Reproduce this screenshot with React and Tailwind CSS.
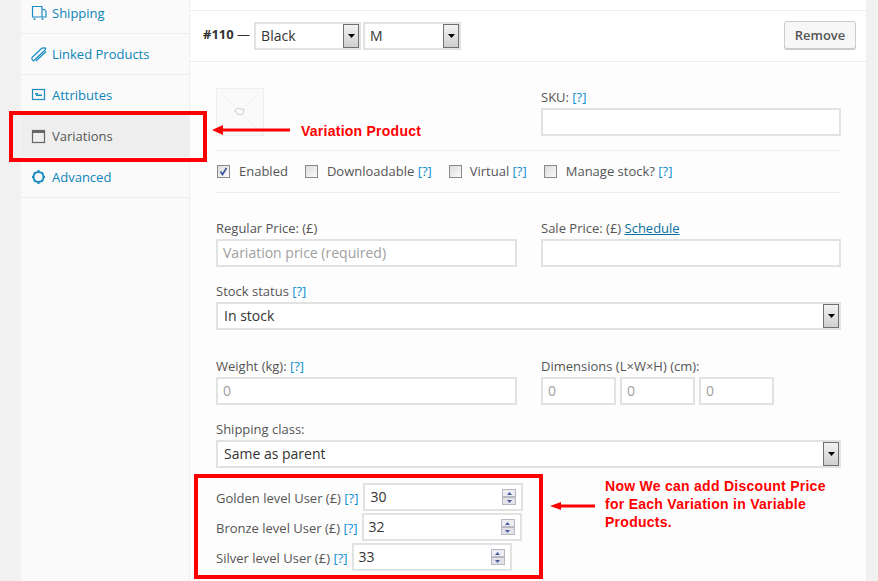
import React from "react";

const font = { fontFamily: '"Open Sans", sans-serif' };

function Help() {
  return <span className="text-[#0c8fd0]">[?]</span>;
}

function NavRow({ icon, label, active, first }) {
  return (
    <div
      className={`flex h-[41px] items-center border-b border-[#eeeeee] pl-[10px] text-[13px] ${
        active ? "bg-[#eeeeee] text-[#555555]" : "text-[#0d84b8]"
      } ${first ? "-mt-[7px]" : ""}`}
    >
      <span className="mr-[5px] -mt-[1px] flex h-[16px] w-[16px] items-center justify-center">{icon}</span>
      <span className="mt-[2px]">{label}</span>
    </div>
  );
}

const Truck = (
  <svg width="16" height="16" viewBox="0 0 16 16" fill="none" stroke="#1b8cc0" strokeWidth="1.2">
    <path d="M1.5 12V1.500h9.500V12H1.500z" />
    <path d="M11 4.500h2.500L15 6.500V12h-4" />
    <circle cx="3.500" cy="14" r="1" fill="#1b8cc0" stroke="none" />
    <circle cx="11.500" cy="14" r="1" fill="#1b8cc0" stroke="none" />
  </svg>
);
const LinkIcon = (
  <svg width="16" height="16" viewBox="0 0 16 16" fill="none" stroke="#1b8cc0" strokeWidth="1.200">
    <path d="M1 11.500L10.500 2.500c1-1 3-.7 3.500 0M2.500 15L14 4c1-1 .6-2 0-2.500M1 11.500c-.5 1.200.3 3 1.500 3.500M5 15L15 5.500" />
  </svg>
);
const Attr = (
  <svg width="16" height="16" viewBox="0 0 16 16" fill="none">
    <rect x="1.500" y="2.500" width="12" height="10" stroke="#1b8cc0" strokeWidth="1.200" />
    <rect x="4" y="6" width="3" height="1.500" fill="#1b8cc0" />
    <rect x="5" y="7.500" width="6" height="1.500" fill="#1b8cc0" />
  </svg>
);
const Win = (
  <svg width="16" height="16" viewBox="0 0 16 16" fill="none">
    <rect x="1.500" y="2.500" width="12" height="12" stroke="#666666" strokeWidth="1.200" />
    <rect x="1" y="2" width="13" height="3" fill="#666666" />
  </svg>
);
const Gear = (
  <svg width="16" height="16" viewBox="0 0 16 16" fill="none">
    <circle cx="7.500" cy="8" r="5" stroke="#1b8cc0" strokeWidth="2" />
    <path d="M7.500 1v2.500M7.500 12.500V15M1 8h2M12 8h2M3 3.500l1.300 1.300M12 3.500l-1.300 1.300M3 12.500l1.300-1.300M12 12.500l-1.300-1.300" stroke="#1b8cc0" strokeWidth="2" />
  </svg>
);

function Arrow() {
  return (
    <span className="flex h-full w-[16px] shrink-0 items-center justify-center border border-[#707070] bg-gradient-to-b from-[#f2f2f2] to-[#cfcfcf]">
      <svg width="7" height="4" viewBox="0 0 7 4"><path d="M0 0h7L3.500 4z" fill="#000" /></svg>
    </span>
  );
}

function Select({ children, className = "", pl = "pl-[6px]" }) {
  return (
    <div className={`flex h-[28px] items-center border-2 border-[#e2e2e2] bg-white text-[14px] text-[#333333] ${pl} ${className}`}>
      <span className="-mt-[2px] flex-1 truncate">{children}</span>
      <Arrow />
    </div>
  );
}

function Input({ children, className = "", muted }) {
  return (
    <div className={`flex h-[28px] items-center border-2 border-[#e2e2e2] bg-white pb-[2px] pl-[5px] text-[14px] ${muted ? "text-[#a0a0a0]" : "text-[#333333]"} ${className}`}>
      {children}
    </div>
  );
}

function Check({ checked }) {
  return (
    <span className="flex h-[13px] w-[13px] shrink-0 items-center justify-center border border-[#8a8a8a] bg-gradient-to-br from-[#dcdcdc] to-[#fbfbfb]">
      {checked && (
        <svg width="9" height="9" viewBox="0 0 9 9"><path d="M1.500 4.500l2 3 4-6.500" fill="none" stroke="#3a4f9e" strokeWidth="1.600" /></svg>
      )}
    </span>
  );
}

function Spinner() {
  return (
    <span className="flex w-[14px] flex-col">
      <span className="flex h-[8px] items-center justify-center border border-[#b8b8c4] bg-[#eeeef2]">
        <svg width="5" height="3" viewBox="0 0 5 3"><path d="M0 3h5L2.500 0z" fill="#4a5aa0" /></svg>
      </span>
      <span className="flex h-[8px] items-center justify-center border border-[#b8b8c4] bg-[#e2e2e8]">
        <svg width="5" height="3" viewBox="0 0 5 3"><path d="M0 0h5L2.500 3z" fill="#4a5aa0" /></svg>
      </span>
    </span>
  );
}

function LevelRow({ label, value, gap }) {
  return (
    <div className="flex h-[28px] items-center">
      <span className="whitespace-nowrap pt-[4px] text-[13px] text-[#555555]">
        {label} <Help />
      </span>
      <div className={`flex h-[28px] w-[160px] items-center justify-between border-2 border-[#e2e2e2] bg-white pl-[5px] pr-[5px] text-[14px] text-[#333333] ${gap}`}>
        <span className="-mt-[2px]">{value}</span>
        <Spinner />
      </div>
    </div>
  );
}

function CheckItem({ checked, children, className = "", gap = "gap-[9px]" }) {
  return (
    <span className={`flex items-center ${gap} ${className}`}>
      <Check checked={checked} />
      <span className="mt-[1px]">{children}</span>
    </span>
  );
}

export default function App() {
  return (
    <div style={font} className="relative flex h-[581px] w-[878px] overflow-hidden bg-[#f1f1f1] text-[13px] text-[#555555]">
      <div className="ml-[21px] w-[169px] shrink-0 border-r border-[#eeeeee] bg-[#fafafa]">
        <NavRow first icon={Truck} label="Shipping" />
        <NavRow icon={LinkIcon} label="Linked Products" />
        <NavRow icon={Attr} label="Attributes" />
        <NavRow active icon={Win} label="Variations" />
        <NavRow icon={Gear} label="Advanced" />
      </div>

      <div className="flex w-[676px] shrink-0 flex-col bg-[#fdfdfd]">
        <div className="h-[11px] border-b border-[#eeeeee] bg-white" />
        <div className="flex h-[51px] items-center border-b border-[#eeeeee] bg-white pl-[13px] pr-[10px]">
          <span className="mr-[4px] -mt-[3px] text-[13px] text-[#333333]"><b>#110</b> —</span>
          <Select pl="pl-[5px]" className="w-[107px]">Black</Select>
          <Select pl="pl-[5px]" className="ml-[2px] w-[98px]">M</Select>
          <div className="ml-auto -mt-[2px] flex h-[28px] w-[72px] items-center justify-center rounded-[3px] border border-[#cccccc] bg-[#f7f7f7] pt-[1px] text-[13px] font-semibold text-[#555555] shadow-[0_1px_0_#cccccc]">
            Remove
          </div>
        </div>

        <div className="flex flex-col pl-[26px] pr-[25px]">
          <div className="mt-[26px] flex h-[48px]">
            <div className="h-[48px] w-[48px] border border-[#eeeeee] bg-[#fafafa]">
              <svg width="46" height="46" viewBox="0 0 46 46" fill="none">
                <path d="M0 0l46 46M46 0L28 18" stroke="#f2f2f2" />
                <path d="M18 21l3-2 3 1 3 .5-.5 2.500-1 2.500h-5l-1-2.500-2-1z" stroke="#cfcfcf" fill="#fafafa" />
              </svg>
            </div>
            <div className="ml-[277px] flex w-[300px] flex-col">
              <span className="h-[20px] leading-[19px]">SKU: <Help /></span>
              <Input />
            </div>
          </div>

          <div className="mt-[14px] flex h-[43px] items-center border-y border-[#eeeeee] pl-[1px]">
            <CheckItem checked>Enabled</CheckItem>
            <CheckItem className="ml-[17px]">Downloadable <Help /></CheckItem>
            <CheckItem className="ml-[17px]" gap="gap-[8px]">Virtual <Help /></CheckItem>
            <CheckItem className="ml-[17px]">Manage stock? <Help /></CheckItem>
          </div>

          <div className="mt-[25px] flex">
            <div className="flex w-[301px] flex-col">
              <span className="h-[21px] leading-[21px]">Regular Price: (£)</span>
              <Input muted>Variation price (required)</Input>
            </div>
            <div className="ml-[24px] flex w-[300px] flex-col">
              <span className="h-[21px] leading-[21px]">Sale Price: (£) <span className="text-[#0c6f9f] underline">Schedule</span></span>
              <Input />
            </div>
          </div>

          <span className="mt-[14px] h-[21px] leading-[21px]">Stock status <Help /></span>
          <Select className="w-[625px]">In stock</Select>

          <div className="mt-[26px] flex">
            <div className="flex w-[301px] flex-col">
              <span className="h-[21px] leading-[21px]">Weight (kg): <Help /></span>
              <Input muted>0</Input>
            </div>
            <div className="ml-[24px] flex flex-col">
              <span className="h-[21px] leading-[21px]">Dimensions (L×W×H) (cm):</span>
              <div className="flex gap-[4px]">
                <Input muted className="w-[75px]">0</Input>
                <Input muted className="w-[75px]">0</Input>
                <Input muted className="w-[75px]">0</Input>
              </div>
            </div>
          </div>

          <span className="mt-[14px] h-[21px] leading-[21px]">Shipping class:</span>
          <Select className="w-[625px]">Same as parent</Select>

          <div className="mt-[15px] flex flex-col gap-[2px]">
            <LevelRow label="Golden level User (£)" value="30" gap="ml-[5px]" />
            <LevelRow label="Bronze level User (£)" value="32" gap="ml-[4px]" />
            <LevelRow label="Silver level User (£)" value="33" gap="ml-[4px]" />
          </div>
        </div>
      </div>

      {/* annotations */}
      <div className="absolute left-[9px] top-[111px] h-[51px] w-[198px] border-[4px] border-[#ff0000]" />
      <div className="absolute left-[194px] top-[474px] h-[105px] w-[349px] border-[4px] border-[#ff0000]" />

      <svg className="absolute left-[212px] top-[124px]" width="78" height="12" viewBox="0 0 78 12">
        <path d="M0 6l11-5v3.500h67v3H11V11z" fill="#ff0000" />
      </svg>
      <span style={{ fontFamily: '"Liberation Sans", sans-serif' }} className="absolute left-[301px] top-[123px] text-[14px] font-bold leading-[17px] tracking-[0.25px] text-[#ff0000]">
        Variation Product
      </span>

      <svg className="absolute left-[550px] top-[500px]" width="45" height="12" viewBox="0 0 45 12">
        <path d="M0 6l11-4v2.500h34v3H11V10z" fill="#ff0000" />
      </svg>
      <span style={{ fontFamily: '"Liberation Sans", sans-serif' }} className="absolute left-[605px] top-[477px] w-[240px] text-[14px] font-bold leading-[18px] tracking-[0.27px] text-[#ff0000]">
        Now We can add Discount Price for Each Variation in Variable Products.
      </span>
    </div>
  );
}
